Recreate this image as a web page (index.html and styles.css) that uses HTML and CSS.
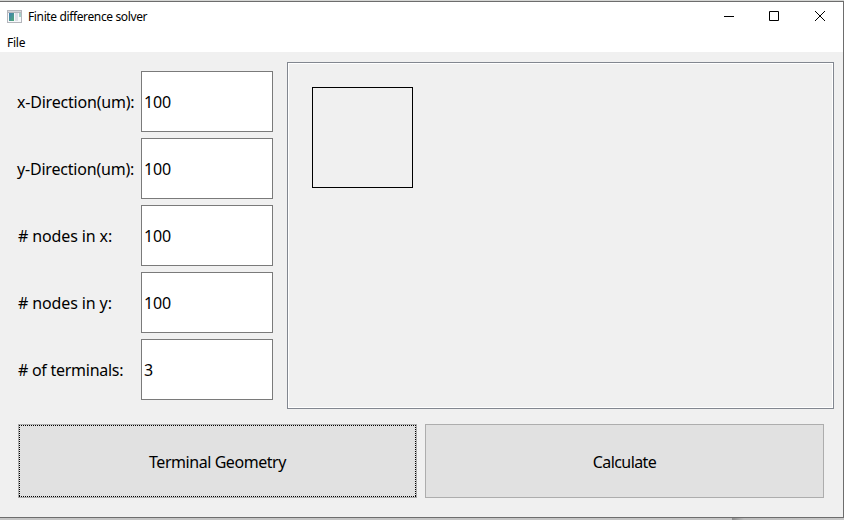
FILE: index.html
```html
<!DOCTYPE html>
<html lang="en">
<head>
<meta charset="utf-8">
<title>Finite difference solver</title>
<link rel="stylesheet" href="styles.css">
</head>
<body>
<div class="window">
  <header class="titlebar">
    <svg class="app-icon" width="15" height="13" viewBox="0 0 15 13">
      <defs><linearGradient id="g" x1="0" y1="0" x2="1" y2="1"><stop offset="0" stop-color="#3f7fb4"/><stop offset="1" stop-color="#4fa876"/></linearGradient></defs>
      <path fill="#b4b6bc" d="M0 0h15v13H0z"/>
      <path fill="#d4d6da" d="M1 1h13v1H1z"/>
      <path fill="#f7f8fa" d="M1 3h13v9H1z"/>
      <path fill="url(#g)" d="M2 3h5v8H2z"/>
      <path fill="#dcdee6" d="M8 3h3v8H8z"/>
      <path fill="#a5cfc8" d="M12 3h2v4h-2z"/>
    </svg>
    <h1 class="title">Finite difference solver</h1>
    <div class="controls">
      <svg width="46" height="29" viewBox="0 0 46 29"><path d="M18 14.500h10" stroke="#000"/></svg>
      <svg width="46" height="29" viewBox="0 0 46 29"><path d="M17.500 9.500h9v9h-9z" fill="none" stroke="#000"/></svg>
      <svg width="46" height="29" viewBox="0 0 46 29"><path d="M17 9l10 10M27 9L17 19" stroke="#000"/></svg>
    </div>
  </header>
  <nav class="menubar"><span class="menu-item">File</span></nav>
  <main class="content">
    <section class="top">
      <div class="form">
        <label class="row"><span class="label direction">x-Direction(um):</span><input class="field" value="100"></label>
        <label class="row"><span class="label direction">y-Direction(um):</span><input class="field" value="100"></label>
        <label class="row"><span class="label nodes"># nodes in x:</span><input class="field" value="100"></label>
        <label class="row"><span class="label nodes"># nodes in y:</span><input class="field" value="100"></label>
        <label class="row"><span class="label terminals"># of terminals:</span><input class="field" value="3"></label>
      </div>
      <div class="canvas"><div class="shape"></div></div>
    </section>
    <section class="actions">
      <button class="button focused"><svg class="focus-ring" width="397" height="72"><path d="M0 .5h397M0 71.500h397M.5 0v72M396.500 0v72"/></svg><span>Terminal Geometry</span></button>
      <button class="button calculate"><span>Calculate</span></button>
    </section>
  </main>
</div>
<div class="desktop"></div>
</body>
</html>
```
FILE: styles.css
```css
* { box-sizing: border-box; }
body {
  margin: 0;
  width: 844px;
  height: 520px;
  padding-top: 1px;
  overflow: hidden;
  background: #d5d6d4;
  color: #000;
  font-family: "Noto Sans", sans-serif;
}
.window {
  height: 517px;
  border: 1px solid #6d6d6d;
  border-left: 0;
  background: #f0f0f0;
}
.titlebar {
  display: flex;
  align-items: center;
  height: 29px;
  padding-left: 7px;
  background: #fff;
}
.app-icon { margin-bottom: 1px; }
.title {
  margin: 0 0 0 6px;
  font-size: 12px;
  font-weight: 400;
  line-height: 29px;
  letter-spacing: -0.37px;
}
.controls { display: flex; margin-right: -1px; margin-left: auto; }
.menubar {
  height: 21px;
  padding: 1px 0 0 7px;
  background: #fff;
  font-size: 12px;
  line-height: 21px;
  letter-spacing: -0.25px;
}
.content { padding: 10px 9px 0 17px; }
.top { display: flex; height: 347px; }
.form {
  display: flex;
  flex-direction: column;
  gap: 6px;
  width: 256px;
  padding-top: 9px;
}
.row { display: flex; align-items: center; height: 61px; }
.label {
  width: 124px;
  font-size: 16px;
  white-space: nowrap;
}
.direction { letter-spacing: -0.2px; }
.nodes { padding-left: 1px; letter-spacing: -0.12px; }
.terminals { padding-left: 1px; letter-spacing: -0.27px; }
.field {
  width: 132px;
  height: 61px;
  padding: 0 2px;
  border: 1px solid #7a7a7a;
  border-radius: 0;
  background: #fff;
  color: #000;
  font: 16px "Noto Sans", sans-serif;
  letter-spacing: -0.15px;
  outline: 0;
}
.canvas {
  width: 547px;
  margin-left: 14px;
  padding: 23px;
  border: 1px solid #828790;
  box-shadow: inset 0 0 0 1px #fff;
}
.shape { width: 101px; height: 101px; margin: 1px; border: 1px solid #000; }
.actions { display: flex; gap: 8px; margin: 15px 0 0 1px; }
.button {
  position: relative;
  width: 399px;
  height: 74px;
  padding: 2px 0 0;
  border: 1px solid #adadad;
  border-radius: 0;
  background: #e1e1e1;
  color: #000;
  font: 16px "Noto Sans", sans-serif;
  letter-spacing: -0.45px;
}
.calculate { letter-spacing: -0.6px; }
.focus-ring { position: absolute; top: 0; left: 0; }
.focus-ring path { fill: none; stroke: #000; stroke-dasharray: 1 1; }
.desktop {
  height: 2px;
  background: linear-gradient(90deg, #c5c5c5 732px, #8b8b8b 732px, #bdbdbd 744px, #c8c8c8);
}
```
